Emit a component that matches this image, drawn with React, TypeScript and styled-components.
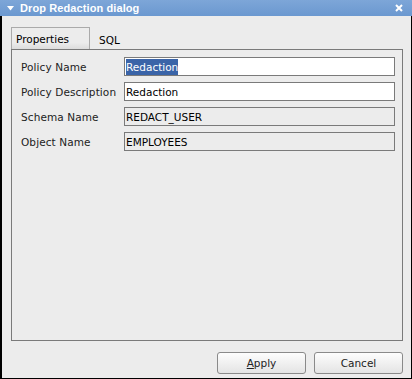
import React from 'react';
import styled, { createGlobalStyle } from 'styled-components';

const GlobalStyle = createGlobalStyle`
  html, body {
    margin: 0;
    padding: 0;
    background: #ececec;
  }
  body {
    font-family: 'DejaVu Sans', Verdana, sans-serif;
  }
`;

const Window = styled.div`
  width: 412px;
  height: 379px;
  box-sizing: border-box;
  border: 1px solid #000;
  border-left-width: 2px;
  border-top: none;
  background: #ececec;
  display: flex;
  flex-direction: column;
`;

const TitleBar = styled.div`
  height: 16px;
  margin-left: -2px;
  margin-right: -1px;
  background: linear-gradient(#7da6d8, #6b98d0);
  display: flex;
  align-items: center;
  padding: 0 9px 0 7px;
  color: #fff;
  font-family: 'Liberation Sans', Arial, sans-serif;
  font-weight: bold;
  font-size: 11px;
`;

const Title = styled.span`
  flex: 1;
  margin-left: 6px;
  letter-spacing: 0.1px;
`;

const Body = styled.div`
  flex: 1;
  display: flex;
  flex-direction: column;
  padding: 11px 8px 0 9px;
`;

const Tabs = styled.div`
  display: flex;
  align-items: flex-end;
  height: 22px;
`;

const Tab = styled.div<{ $active?: boolean }>`
  height: ${(p) => (p.$active ? '22px' : '18px')};
  box-sizing: border-box;
  padding: 0 ${(p) => (p.$active ? '20px' : '7px')} 0 4px;
  font-size: 10.5px;
  color: #000;
  display: flex;
  align-items: center;
  border: ${(p) => (p.$active ? '1px solid #aaa' : 'none')};
  border-bottom: none;
  background: ${(p) => (p.$active ? 'linear-gradient(#ececec, #ececec 70%, #dcdcdc)' : 'transparent')};
  margin-right: 5px;
`;

const Panel = styled.div`
  height: 292px;
  box-sizing: border-box;
  border: 1px solid #7a7a7a;
  padding: 7px 7px 0 9px;
  display: flex;
  flex-direction: column;
  gap: 6px;
`;

const Row = styled.div`
  display: flex;
  align-items: center;
  height: 19px;
`;

const Label = styled.div`
  width: 103px;
  font-size: 10.5px;
  color: #222;
  letter-spacing: 0.1px;
`;

const Field = styled.div<{ $readOnly?: boolean }>`
  flex: 1;
  height: 19px;
  box-sizing: border-box;
  border: 1px solid #7a7a7a;
  background: ${(p) => (p.$readOnly ? '#ececec' : '#fff')};
  font-size: 10.5px;
  color: #000;
  display: flex;
  align-items: center;
  padding-left: 1px;
`;

const Selected = styled.span`
  background: #3a64a8;
  color: #fff;
  padding: 2px 0;
`;

const Footer = styled.div`
  display: flex;
  justify-content: flex-end;
  gap: 8px;
  padding: 11px 0 0;
`;

const Button = styled.button`
  width: 89px;
  height: 22px;
  border: 1px solid #8a8a8a;
  border-radius: 3px;
  background: linear-gradient(#fdfdfd, #e4e4e4);
  font-family: 'DejaVu Sans', Verdana, sans-serif;
  font-size: 10.5px;
  color: #222;
  padding: 0;
`;

const Mnemonic = styled.span`
  text-decoration: underline;
`;

const fields = [
  { label: 'Policy Name', value: 'Redaction', selected: true },
  { label: 'Policy Description', value: 'Redaction' },
  { label: 'Schema Name', value: 'REDACT_USER', readOnly: true },
  { label: 'Object Name', value: 'EMPLOYEES', readOnly: true },
];

export default function App() {
  return (
    <>
      <GlobalStyle />
      <Window>
        <TitleBar>
          <svg width="7" height="5" viewBox="0 0 7 5">
            <path d="M0 0 L7 0 L3.5 4.5 Z" fill="#fff" />
          </svg>
          <Title>Drop Redaction dialog</Title>
          <svg width="8" height="8" viewBox="0 0 8 8">
            <path d="M1 1 L7 7 M7 1 L1 7" stroke="#fff" strokeWidth="2" />
          </svg>
        </TitleBar>
        <Body>
          <Tabs>
            <Tab $active>Properties</Tab>
            <Tab>SQL</Tab>
          </Tabs>
          <Panel>
            {fields.map((f) => (
              <Row key={f.label}>
                <Label>{f.label}</Label>
                <Field $readOnly={f.readOnly}>
                  {f.selected ? <Selected>{f.value}</Selected> : f.value}
                </Field>
              </Row>
            ))}
          </Panel>
          <Footer>
            <Button>
              <Mnemonic>A</Mnemonic>pply
            </Button>
            <Button>Cancel</Button>
          </Footer>
        </Body>
      </Window>
    </>
  );
}
